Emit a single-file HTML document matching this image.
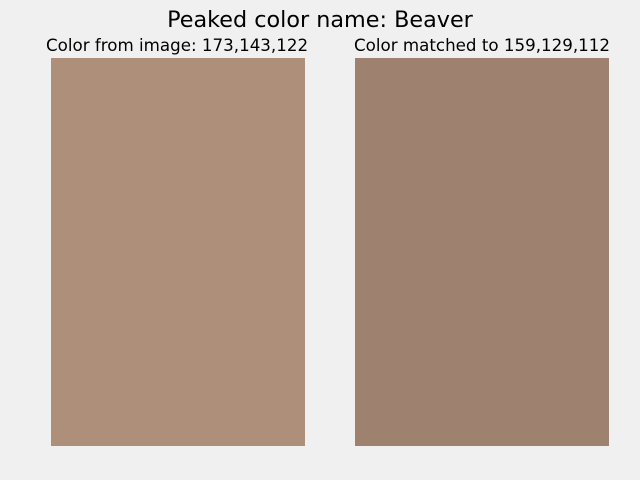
<!DOCTYPE html>
<html><head><style>
body{margin:0;width:640px;height:480px;background:#f0f0f0;position:relative;font-family:"DejaVu Sans",sans-serif;overflow:hidden}
.t{position:absolute;white-space:nowrap;color:#000}
.r{position:absolute;top:58px;width:254px;height:388px}
</style></head><body>
<div class="t" style="left:0;width:640px;text-align:center;top:7px;font-size:22.3px">Peaked color name: Beaver</div>
<div class="t" style="left:46px;top:35px;font-size:16.7px">Color from image: 173,143,122</div>
<div class="t" style="left:354px;top:35px;font-size:16.7px">Color matched to 159,129,112</div>
<div class="r" style="left:51px;background:rgb(173,143,122)"></div>
<div class="r" style="left:355px;background:rgb(159,129,112)"></div>
</body></html>
